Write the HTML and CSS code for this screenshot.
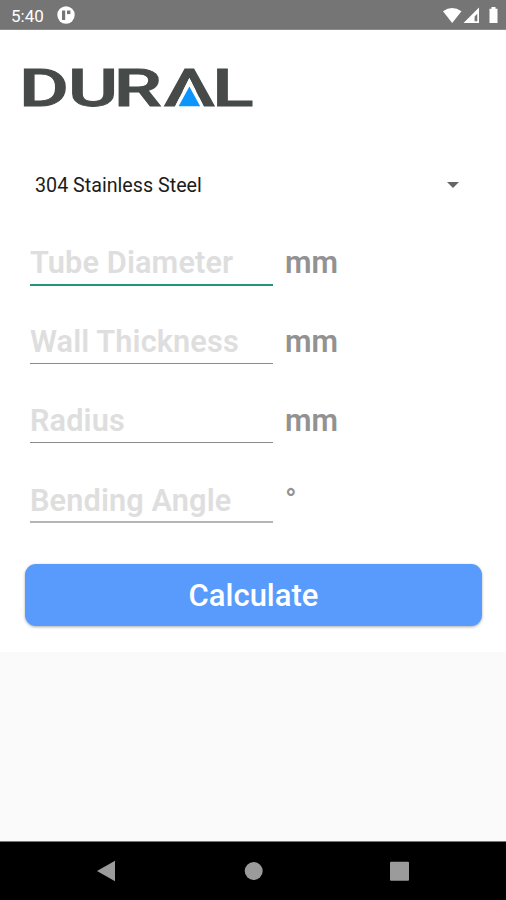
FILE: index.html
```html
<!DOCTYPE html>
<html lang="en">
<head>
<meta charset="utf-8">
<title>Dural</title>
<link rel="stylesheet" href="styles.css">
</head>
<body>
<div class="screen">
  <header class="status">
    <span class="time">5:40</span>
    <svg class="app-icon" width="18" height="18" viewBox="0 0 18 18"><circle cx="9" cy="9" r="8.7" fill="#fff"/><rect x="5" y="4.5" width="3.2" height="9.5" fill="#757575"/><rect x="10" y="4.5" width="3.4" height="3.6" fill="#757575"/></svg>
    <svg class="signals" width="56" height="18" viewBox="0 0 56 18" fill="#fff"><path d="M0 4.2Q9 -2.2 18.5 4.2L9.2 16Z"/><path fill-rule="evenodd" d="M36 0.5V16H20.5ZM34.3 6.8L31.6 9.6V14.3H34.3Z"/><path d="M46.5 1.8H48.5V0H52.5V1.8H54.5V16H46.5Z"/></svg>
  </header>
  <main class="card">
    <svg class="logo" width="284" height="84" viewBox="-12 -24 284 84">
      <text class="wordmark" transform="scale(1.5 1)" x="-3.3 29.3 59.8 93.4 125.5" y="41.7">DURAL</text>
      <path d="M165.4 14L180 43H150.8Z" fill="#fff"/>
      <path d="M165.4 22.5L176.2 42.2H154.6Z" fill="#0c96fb"/>
    </svg>
    <div class="select"><span>304 Stainless Steel</span><i class="caret"></i></div>
    <div class="row"><div class="field active"><span class="hint">Tube Diameter</span></div><span class="unit">mm</span></div>
    <div class="row"><div class="field"><span class="hint">Wall Thickness</span></div><span class="unit">mm</span></div>
    <div class="row"><div class="field"><span class="hint">Radius</span></div><span class="unit">mm</span></div>
    <div class="row"><div class="field last"><span class="hint">Bending Angle</span></div><span class="unit degree">°</span></div>
    <button class="calculate">Calculate</button>
  </main>
  <nav class="navbar">
    <svg width="506" height="58" viewBox="0 0 506 58" fill="#9b9b9b"><path d="M97 29L115 18.7V39.3Z"/><circle cx="253.7" cy="29" r="9"/><rect x="390" y="19.7" width="19" height="19" rx="1"/></svg>
  </nav>
</div>
</body>
</html>
```
FILE: styles.css
```css
* { box-sizing: border-box; }
body { margin: 0; font-family: Roboto, sans-serif; }
.screen { width: 506px; height: 900px; display: flex; flex-direction: column; background: #fafafa; overflow: hidden; }
.status { height: 30px; flex: none; background: #757575; display: flex; align-items: center; padding: 2px 7px 0 11px; color: #fff; border-bottom: 1px solid #8c8c8c; }
.time { font-size: 17px; line-height: 20px; width: 46px; }
.app-icon { position: relative; top: -0.5px; }
.signals { margin-left: auto; }
.card { height: 622px; flex: none; background: #fff; padding: 10px 24px 0; display: flex; flex-direction: column; }
.logo { flex: none; display: block; margin-left: -12px; }
.wordmark { font-family: Roboto, sans-serif; font-size: 51px; font-weight: 500; fill: #464a49; stroke: #464a49; stroke-width: 0.9px; }
.select { height: 40px; margin: 41px 23px 0 11px; display: flex; align-items: center; justify-content: space-between; font-size: 19.7px; color: #1c1c1c; }
.caret { border: 6px solid transparent; border-top-color: #666; border-bottom: 0; }
.row { height: 79.2px; flex: none; padding-left: 6px; display: flex; gap: 12px; font-size: 30px; font-weight: 600; line-height: 37px; }
.select + .row { margin-top: 39px; }
.field { width: 243px; height: 41px; border-bottom: 1px solid #8c8c8c; color: #dedede; white-space: nowrap; font-size: 30.7px; font-weight: 600; letter-spacing: 0.12px; line-height: 38px; }
.active { height: 42px; border-bottom: 2px solid #20957f; }
.last { border-bottom: 2px solid #b5b5b5; }
.unit { color: #929292; font-size: 30.5px; line-height: 38px; }
.degree { font-weight: 500; }
.calculate { width: 457px; height: 62px; flex: none; margin: 3px 0 0 1px; border: 0; border-radius: 11px; background: #589bfc; color: #fff; font: 500 31px/64px Roboto, sans-serif; padding: 0; box-shadow: 0 1px 3px #0005; }
.navbar { height: 59px; margin-top: auto; background: #000; border-top: 1px solid #777; flex: none; }
.navbar svg { display: block; }
```
